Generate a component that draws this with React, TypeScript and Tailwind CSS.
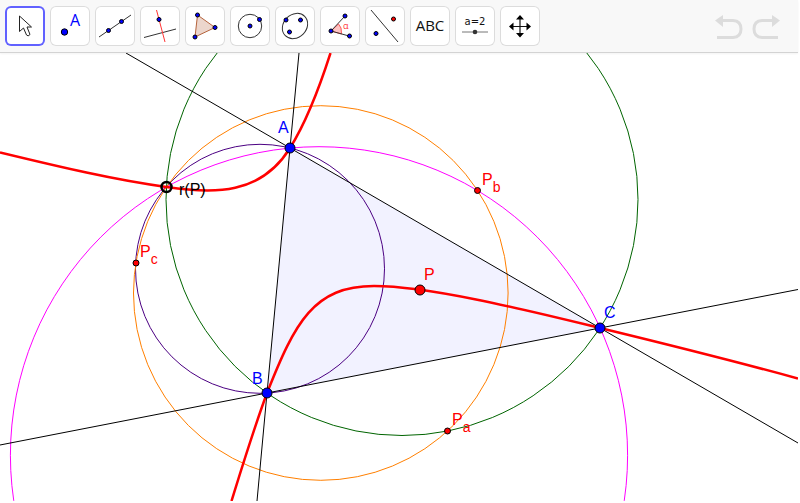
import type { ReactNode } from "react";

const Dot = ({ x, y, r = 2, fill = "#0000ff" }: { x: number; y: number; r?: number; fill?: string }) => (
  <circle cx={x} cy={y} r={r} fill={fill} stroke="#000" strokeWidth="1" />
);

const tools: { name: string; icon: ReactNode }[] = [
  {
    name: "Move",
    icon: (
      <path
        d="M14.5 10V25.5L18.5 22 21.5 29Q23 31 25 28.5L22 21H26.5z"
        fill="#fff"
        stroke="#222"
        strokeWidth="1"
      />
    ),
  },
  {
    name: "Point",
    icon: (
      <>
        <Dot x={14.5} y={26} r={3.2} />
        <text x="20" y="20" fontSize="16" fill="#0000ff">A</text>
      </>
    ),
  },
  {
    name: "Line",
    icon: (
      <>
        <path d="M4 31 36 9" stroke="#333" />
        <Dot x={13.5} y={24.5} />
        <Dot x={26.5} y={15.5} />
      </>
    ),
  },
  {
    name: "Perpendicular Line",
    icon: (
      <>
        <path d="M4 31.5 36 23" stroke="#333" />
        <path d="M16.5 4 25 36" stroke="#ff3333" />
        <Dot x={19} y={13.5} />
      </>
    ),
  },
  {
    name: "Polygon",
    icon: (
      <>
        <path d="M12.5 9 30 21.5 10 31z" fill="#ecd6cc" stroke="#b5633c" />
        <Dot x={12.5} y={9} />
        <Dot x={30} y={21.5} />
        <Dot x={10} y={31} />
      </>
    ),
  },
  {
    name: "Circle with Center through Point",
    icon: (
      <>
        <circle cx="20" cy="20" r="11.7" fill="none" stroke="#333" />
        <Dot x={20} y={20} />
        <Dot x={29.5} y={13.5} />
      </>
    ),
  },
  {
    name: "Conic",
    icon: (
      <>
        <ellipse cx="20" cy="20" rx="13.7" ry="11.5" transform="rotate(-45 20 20)" fill="none" stroke="#333" />
        <Dot x={11} y={14} />
        <Dot x={25.5} y={14} />
        <Dot x={14.5} y={26} />
      </>
    ),
  },
  {
    name: "Angle",
    icon: (
      <>
        <path d="M11 25 18.5 18Q22 21 21.5 28z" fill="#ffc4c4" stroke="#ff5555" />
        <path d="M25 10 11 25 29 30" fill="none" stroke="#333" />
        <Dot x={25} y={10} />
        <Dot x={11} y={25} />
        <Dot x={29.5} y={30} />
        <text x="23" y="23" fontSize="9" fill="#ff3333">α</text>
      </>
    ),
  },
  {
    name: "Reflect about Line",
    icon: (
      <>
        <path d="M6 4 33 36" stroke="#333" />
        <Dot x={28.5} y={13} fill="#ff0000" />
        <Dot x={11} y={27.5} />
      </>
    ),
  },
  {
    name: "Text",
    icon: (
      <text x="20" y="25" fontSize="15" textAnchor="middle" fill="#111">ABC</text>
    ),
  },
  {
    name: "Slider",
    icon: (
      <>
        <text x="20" y="19" fontSize="10" textAnchor="middle" fill="#111" className="font-['DejaVu_Sans',sans-serif]">
          a=2
        </text>
        <path d="M7 26H33" stroke="#777" />
        <circle cx="20" cy="26" r="2.3" fill="#333" />
      </>
    ),
  },
  {
    name: "Move Graphics View",
    icon: (
      <>
        <path d="M20 12V29M12 20.5H28" stroke="#111" strokeWidth="1.2" />
        <path d="M20 9l4 4.500h-8zM20 31.500l4-4.500h-8zM9 20.500l4.500-4v8zM31 20.500l-4.500-4v8z" fill="#000" />
      </>
    ),
  },
];

const circles = [
  { cx: 402, cy: 199.5, r: 236, color: "#006400" },
  { cx: 319, cy: 455.3, r: 308.6, color: "#ff00ff" },
  { cx: 260, cy: 268.8, r: 124.5, color: "#4b0082" },
  { cx: 320.8, cy: 293, r: 187.3, color: "#ff7f00" },
];

const points = [
  { x: 290, y: 148, r: 5, fill: "#0000ff" },
  { x: 267, y: 393, r: 5, fill: "#0000ff" },
  { x: 600, y: 328, r: 5, fill: "#0000ff" },
  { x: 420, y: 290, r: 5, fill: "#ff0000" },
  { x: 477.5, y: 190.5, r: 3, fill: "#ff0000" },
  { x: 447.5, y: 431, r: 3, fill: "#ff0000" },
  { x: 136, y: 263, r: 3, fill: "#ff0000" },
];

const labels = [
  { x: 278, y: 133, text: "A", color: "#0000ff" },
  { x: 252, y: 384, text: "B", color: "#0000ff" },
  { x: 604, y: 318, text: "C", color: "#0000ff" },
  { x: 424, y: 280, text: "P", color: "#ff0000" },
  { x: 482, y: 185, text: "P", sub: "b", color: "#ff0000" },
  { x: 452, y: 425, text: "P", sub: "a", color: "#ff0000" },
  { x: 140, y: 257, text: "P", sub: "c", color: "#ff0000" },
  { x: 179, y: 195, text: "r(P)", color: "#000000" },
];

function Toolbar() {
  return (
    <header className="flex h-[53px] items-center justify-between border-b border-[#d3d3d3] bg-[#f8f8f8] pl-[5px] pr-4 shadow-xs">
      <div className="flex gap-[5px] font-['Open_Sans',sans-serif]">
        {tools.map((tool, i) => (
          <button
            key={tool.name}
            type="button"
            aria-label={tool.name}
            className={`size-10 overflow-hidden rounded-md bg-white ${
              i === 0 ? "ring-2 ring-inset ring-[#6161ff]" : "ring-1 ring-inset ring-[#dcdcdc]"
            }`}>
            <svg viewBox="0 0 40 40" className="size-full">{tool.icon}</svg>
          </button>
        ))}
      </div>
      <div className="flex gap-1 text-[#dcdcdc]">
        <button type="button" aria-label="Undo" className="size-8">
          <svg viewBox="0 0 32 32" fill="none" stroke="currentColor" strokeWidth="3">
            <path d="M3 27.5H19Q27 27 27 19T19 10.500H8" />
            <path d="M1 10.5 9 5v12z" fill="currentColor" stroke="none" />
          </svg>
        </button>
        <button type="button" aria-label="Redo" className="size-8">
          <svg viewBox="0 0 32 32" fill="none" stroke="currentColor" strokeWidth="3">
            <path d="M28 27.5H12Q4 27 4 19T12 10.500H23" />
            <path d="M30 10.5 22 5v12z" fill="currentColor" stroke="none" />
          </svg>
        </button>
      </div>
    </header>
  );
}

function Construction() {
  return (
    <svg viewBox="0 53 798 448" className="block w-full" role="img" aria-label="Triangle ABC with cubic through P">
      <path d="M290 148 267 393 600 328z" fill="#f2f2ff" />
      <g fill="none" strokeWidth="1">
        {circles.map((c) => (
          <circle key={c.color} cx={c.cx} cy={c.cy} r={c.r} stroke={c.color} />
        ))}
      </g>
      <path
        d="M126 53 290 148 600 328 798 443M0 445 267 393 600 328 798 289.5M299 53 290 148 267 393 257 501"
        fill="none"
        stroke="#000"
      />
      <g fill="none" stroke="#ff0000" strokeWidth="2.5">
        <path d="M0 152.5C60 167 115 180 166.500 187C214 194 261 195 290 148C305 124 318 92 330.500 53" />
        <path d="M231.5 501C243 464 254 428 267 393C295 322 314 286 374 286C430 286 530 311 600 328C670 345 734 361 798 378.500" />
      </g>
      {points.map((p) => (
        <circle key={`${p.x}-${p.y}`} cx={p.x} cy={p.y} r={p.r} fill={p.fill} stroke="#000" />
      ))}
      <circle cx="166.5" cy="187" r="5" fill="none" stroke="#000" strokeWidth="2.5" />
      <g fontSize="16">
        {labels.map((l) => (
          <text key={l.text + (l.sub ?? "")} x={l.x} y={l.y} fill={l.color}>
            {l.text}
            {l.sub && <tspan dy="7" fontSize="14">{l.sub}</tspan>}
          </text>
        ))}
      </g>
    </svg>
  );
}

export default function App() {
  return (
    <main className="bg-white pr-[2px] font-['Liberation_Sans',Arial,sans-serif]">
      <Toolbar />
      <Construction />
    </main>
  );
}
